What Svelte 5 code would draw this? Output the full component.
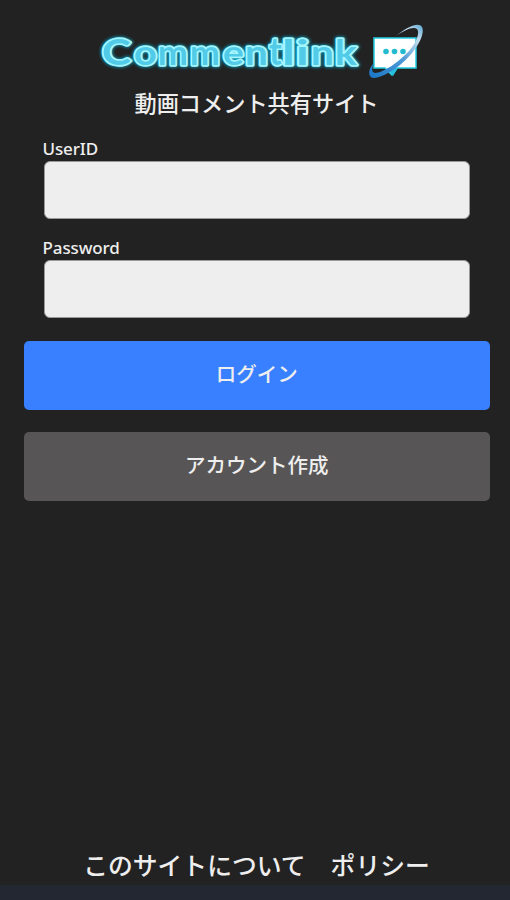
<script lang="ts">

    interface Letter {
        char: string;
        x: number;
        width: number;
        size: number;
    }

    const letters: Letter[] = [
        { char: 'C', x: 17, width: 29, size: 37 },
        { char: 'o', x: 49, width: 23, size: 34 },
        { char: 'm', x: 73, width: 30, size: 35 },
        { char: 'm', x: 105, width: 30, size: 35 },
        { char: 'e', x: 138, width: 21, size: 34 },
        { char: 'n', x: 160, width: 23, size: 35 },
        { char: 't', x: 184, width: 13, size: 38 },
        { char: 'l', x: 197, width: 13, size: 35 },
        { char: 'i', x: 211, width: 13, size: 35 },
        { char: 'n', x: 226, width: 23, size: 35 },
        { char: 'k', x: 250, width: 22, size: 35 }
    ];

    const layers = ['glow', 'tube', 'core'];

    let userId = $state('');
    let password = $state('');

</script>

<div class="page">
    <header>
        <svg class="logo" viewBox="0 0 340 70" role="img" aria-label="Commentlink">
            <defs>
                <linearGradient id="ring" x1="0" y1="1" x2="1" y2="0">
                    <stop offset="0" stop-color="#1776c8" />
                    <stop offset="0.5" stop-color="#4f9ad8" />
                    <stop offset="0.82" stop-color="#c5dcec" />
                    <stop offset="1" stop-color="#5aa9d4" />
                </linearGradient>
            </defs>
            {#each layers as layer}
                <g class={layer}>
                    {#each letters as letter}
                        <text
                            x={letter.x}
                            y="49.5"
                            font-size={letter.size}
                            textLength={letter.width}
                            lengthAdjust="spacingAndGlyphs">{letter.char}</text>
                    {/each}
                </g>
            {/each}

            <path class="bubble" d="M289 23H331V53H312L307 60L300 53H289Z" />
            <path d="M302 53H313L308 61Z" fill="#25bfdd" />
            <circle class="dot" cx="301" cy="36.5" r="2.8" />
            <circle class="dot" cx="309.5" cy="36.5" r="2.8" />
            <circle class="dot" cx="318" cy="36.5" r="2.8" />
            <path
                d="M311 21C323 11 334 7 337 12C341 20 329 39 315 50C301 61 287 66 285 61C283 57 285 52 289 48C287 53 286 57 290 58C298 58 314 47 324 36C332 27 335 17 332 14C328 11 320 15 311 21Z"
                fill="url(#ring)" />
        </svg>
        <h1>動画コメント共有サイト</h1>
    </header>

    <form onsubmit={(event) => event.preventDefault()}>
        <div class="field">
            <label for="user-id">UserID</label>
            <input id="user-id" type="text" bind:value={userId} />
        </div>
        <div class="field">
            <label for="password">Password</label>
            <input id="password" type="password" bind:value={password} />
        </div>
        <button class="login" type="submit">ログイン</button>
        <button class="create" type="button">アカウント作成</button>
    </form>

    <footer>
        <a href="#about">このサイトについて</a>
        <a href="#policy">ポリシー</a>
    </footer>
    <div class="bottom-bar"></div>
</div>

<style>
    :global(body) {
        margin: 0;
        background-color: #222;
    }

    .page {
        display: flex;
        flex-direction: column;
        height: 900px;
        overflow: hidden;
        background-color: #222;
        color: #eee;
        font-family: "Noto Sans", "Noto Sans CJK JP", sans-serif;
    }

    header {
        display: flex;
        flex-direction: column;
        align-items: center;
        height: 140px;
        padding-top: 15px;
        box-sizing: border-box;
    }

    .logo {
        width: 340px;
        height: 70px;
        flex: none;
        overflow: visible;
    }

    .logo text {
        font-family: Lato, sans-serif;
        font-weight: 700;
        stroke-linejoin: round;
    }

    .glow {
        fill: #0b8fae;
        stroke: #0b8fae;
        stroke-width: 5px;
        filter: blur(1.8px);
    }

    .tube {
        fill: #a5f5ff;
        stroke: #a5f5ff;
        stroke-width: 3.4px;
    }

    .core {
        fill: #35bddf;
        stroke: none;
        opacity: 0.75;
    }

    .bubble {
        fill: #fff;
        stroke: #24cde2;
        stroke-width: 1.5px;
    }

    .dot {
        fill: #22bbd0;
    }

    h1 {
        margin: 1px 0 0 3px;
        font-family: "Noto Sans CJK JP", sans-serif;
        font-size: 22.2px;
        font-weight: 500;
        line-height: 32px;
        white-space: nowrap;
    }

    form {
        display: flex;
        flex-direction: column;
        padding: 0 20px 0 23.5px;
    }

    .field {
        display: flex;
        flex-direction: column;
        height: 79px;
        margin: 0 20px 20px;
    }

    label {
        height: 21px;
        margin-left: -1px;
        font-size: 17px;
        font-weight: 500;
        line-height: 18px;
        letter-spacing: -0.1px;
    }

    input {
        width: 100%;
        height: 58px;
        box-sizing: border-box;
        padding: 0 12px;
        border: 1px solid #999;
        border-radius: 6px;
        background-color: #eee;
        font-size: 20px;
    }

    button {
        height: 69px;
        padding: 0 0 5px;
        border: none;
        border-radius: 5px;
        color: #eee;
        font-family: "Noto Sans CJK JP", sans-serif;
        font-size: 20.5px;
        font-weight: 500;
    }

    .login {
        margin-top: 3px;
        background-color: #3880ff;
    }

    .create {
        margin-top: 22px;
        background-color: #575555;
    }

    footer {
        display: flex;
        justify-content: center;
        gap: 25px;
        margin-top: auto;
        padding: 0 0 1px 3px;
        font-family: "Noto Sans CJK JP", sans-serif;
        font-size: 24.8px;
        font-weight: 500;
        line-height: 40px;
    }

    footer a {
        color: #eee;
        text-decoration: none;
        white-space: nowrap;
    }

    .bottom-bar {
        flex: none;
        height: 15px;
        background-color: #232731;
    }
</style>
